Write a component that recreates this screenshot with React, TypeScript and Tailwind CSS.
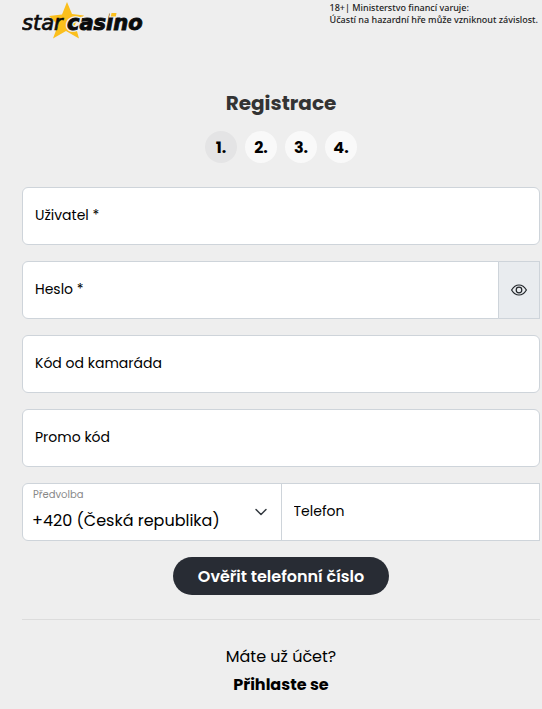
import { useState } from "react";
import { clsx } from "clsx";

const steps = [1, 2, 3, 4];

const prefixes = [
  { value: "+420", label: "+420 (Česká republika)" },
  { value: "+421", label: "+421 (Slovensko)" },
];

type TextFieldProps = {
  id: string;
  label: string;
  type?: string;
  className?: string;
};

const TextField = ({ id, label, type = "text", className }: TextFieldProps) => (
  <div className="relative min-w-0 flex-1">
    <input
      id={id}
      type={type}
      placeholder=" "
      className={clsx(
        "peer block h-[58px] w-full border border-[#ced4da] bg-white px-3 pt-4 text-base text-black outline-none",
        className ?? "rounded-md"
      )}
    />
    <label
      htmlFor={id}
      className="pointer-events-none absolute inset-x-[13px] top-0 hidden truncate text-sm leading-[56px] text-black peer-placeholder-shown:block"
    >
      {label}
    </label>
  </div>
);

const Logo = () => (
  <svg viewBox="0 0 124 40" className="h-10 w-[124px]" role="img" aria-label="star casino">
    <path d="M45 2 L50 14 L62 15.500 L53 24 L57 38.500 L44 31 L31 38.500 L36 25 L27 16 L40 14.500 Z" fill="#fbbf1c" />
    <g fontFamily="'DejaVu Sans', sans-serif" fontStyle="italic" fontSize="21" fill="#0b0b0b" stroke="#0b0b0b">
      <text x="0" y="30" strokeWidth="0.7">
        star
      </text>
      {/* light outline that separates the word from the star */}
      <text x="45" y="30" fontWeight="bold" stroke="#eee" strokeWidth="3.500" aria-hidden="true">
        casino
      </text>
      <text x="45" y="30" fontWeight="bold" strokeWidth="0.900">
        casino
      </text>
    </g>
    <path d="M88 12 h8 l-1 5.500 h-8 Z" fill="#eee" />
    <path d="M89.500 13 h5 l-0.700 3.500 h-5 Z" fill="#fbbf1c" />
  </svg>
);

export default function App() {
  const [showPassword, setShowPassword] = useState(false);
  const [step, setStep] = useState(1);

  return (
    <div className="min-h-screen bg-[#eeeeee] pr-[2px] pb-2 pl-[22px] font-[Poppins,Inter,sans-serif] text-black">
      <header className="flex h-12 items-start justify-between">
        <a href="#">
          <Logo />
        </a>
        <p className="pt-[2px] pr-[2px] font-['Noto_Sans',sans-serif] text-[9px] leading-3 font-medium text-[#222]">
          18+| Ministerstvo financí varuje:
          <br />
          Účastí na hazardní hře může vzniknout závislost.
        </p>
      </header>

      <main className="pt-10">
        <h1 className="text-center text-xl leading-[30px] font-bold text-[#333]">Registrace</h1>

        {/* Steps */}
        <div className="mt-[13px] flex justify-center gap-2">
          {steps.map((n) => (
            <button
              key={n}
              type="button"
              onClick={() => setStep(n)}
              className={clsx(
                "size-8 rounded-full pt-px text-base font-bold",
                n === step ? "bg-[#e4e4e5]" : "bg-[#f9f9f9]"
              )}
            >
              {n}.
            </button>
          ))}
        </div>

        <form className="mt-6 flex flex-col gap-4" onSubmit={(e) => e.preventDefault()}>
          <TextField id="username" label="Uživatel *" />

          <div className="flex">
            <TextField
              id="password"
              label="Heslo *"
              type={showPassword ? "text" : "password"}
              className="rounded-l-md"
            />
            <button
              type="button"
              aria-label="Zobrazit heslo"
              onClick={() => setShowPassword(!showPassword)}
              className="-ml-px flex w-[42px] items-center justify-center border border-[#ced4da] bg-[#e9ecef]"
            >
              <svg viewBox="0 0 16 16" className="size-4" fill="none" stroke="#212529" strokeWidth="1.200">
                <path d="M0.600 8 C2.200 5.300 4.800 3 8 3 S13.800 5.300 15.400 8 C13.800 10.700 11.200 13 8 13 S2.200 10.700 0.600 8 Z" />
                <circle cx="8" cy="8" r="2.800" />
              </svg>
            </button>
          </div>

          <TextField id="friend-code" label="Kód od kamaráda" />
          <TextField id="promo-code" label="Promo kód" />

          {/* Phone */}
          <div className="flex">
            <div className="relative min-w-0 flex-1">
              <select
                id="prefix"
                className="block h-[58px] w-full appearance-none rounded-l-md border border-[#ced4da] bg-white pt-[18px] pr-9 pl-[9px] text-base text-black outline-none"
              >
                {prefixes.map((p) => (
                  <option key={p.value} value={p.value}>
                    {p.label}
                  </option>
                ))}
              </select>
              <label
                htmlFor="prefix"
                className="pointer-events-none absolute top-1 left-[11px] text-[10px] leading-4 text-[#888]"
              >
                Předvolba
              </label>
              <svg
                viewBox="0 0 16 16"
                className="pointer-events-none absolute top-[21px] right-[13px] size-4"
                fill="none"
                stroke="#343a40"
                strokeWidth="1.500"
                strokeLinecap="round"
                strokeLinejoin="round"
              >
                <path d="M3 5.500 L8 10.500 L13 5.500" />
              </svg>
            </div>
            <div className="-ml-px flex min-w-0 flex-1">
              <TextField id="phone" label="Telefon" type="tel" className="rounded-none" />
            </div>
          </div>

          <button
            type="submit"
            className="h-[38px] self-center rounded-full bg-[#282c34] px-[25px] pt-px text-base font-semibold text-white"
          >
            Ověřit telefonní číslo
          </button>
        </form>

        <hr className="mt-6 border-[#dcdcdc]" />

        <div className="mt-[23px] text-center text-base leading-7">
          <p>Máte už účet?</p>
          <a href="#" className="font-bold">
            Přihlaste se
          </a>
        </div>
      </main>
    </div>
  );
}
